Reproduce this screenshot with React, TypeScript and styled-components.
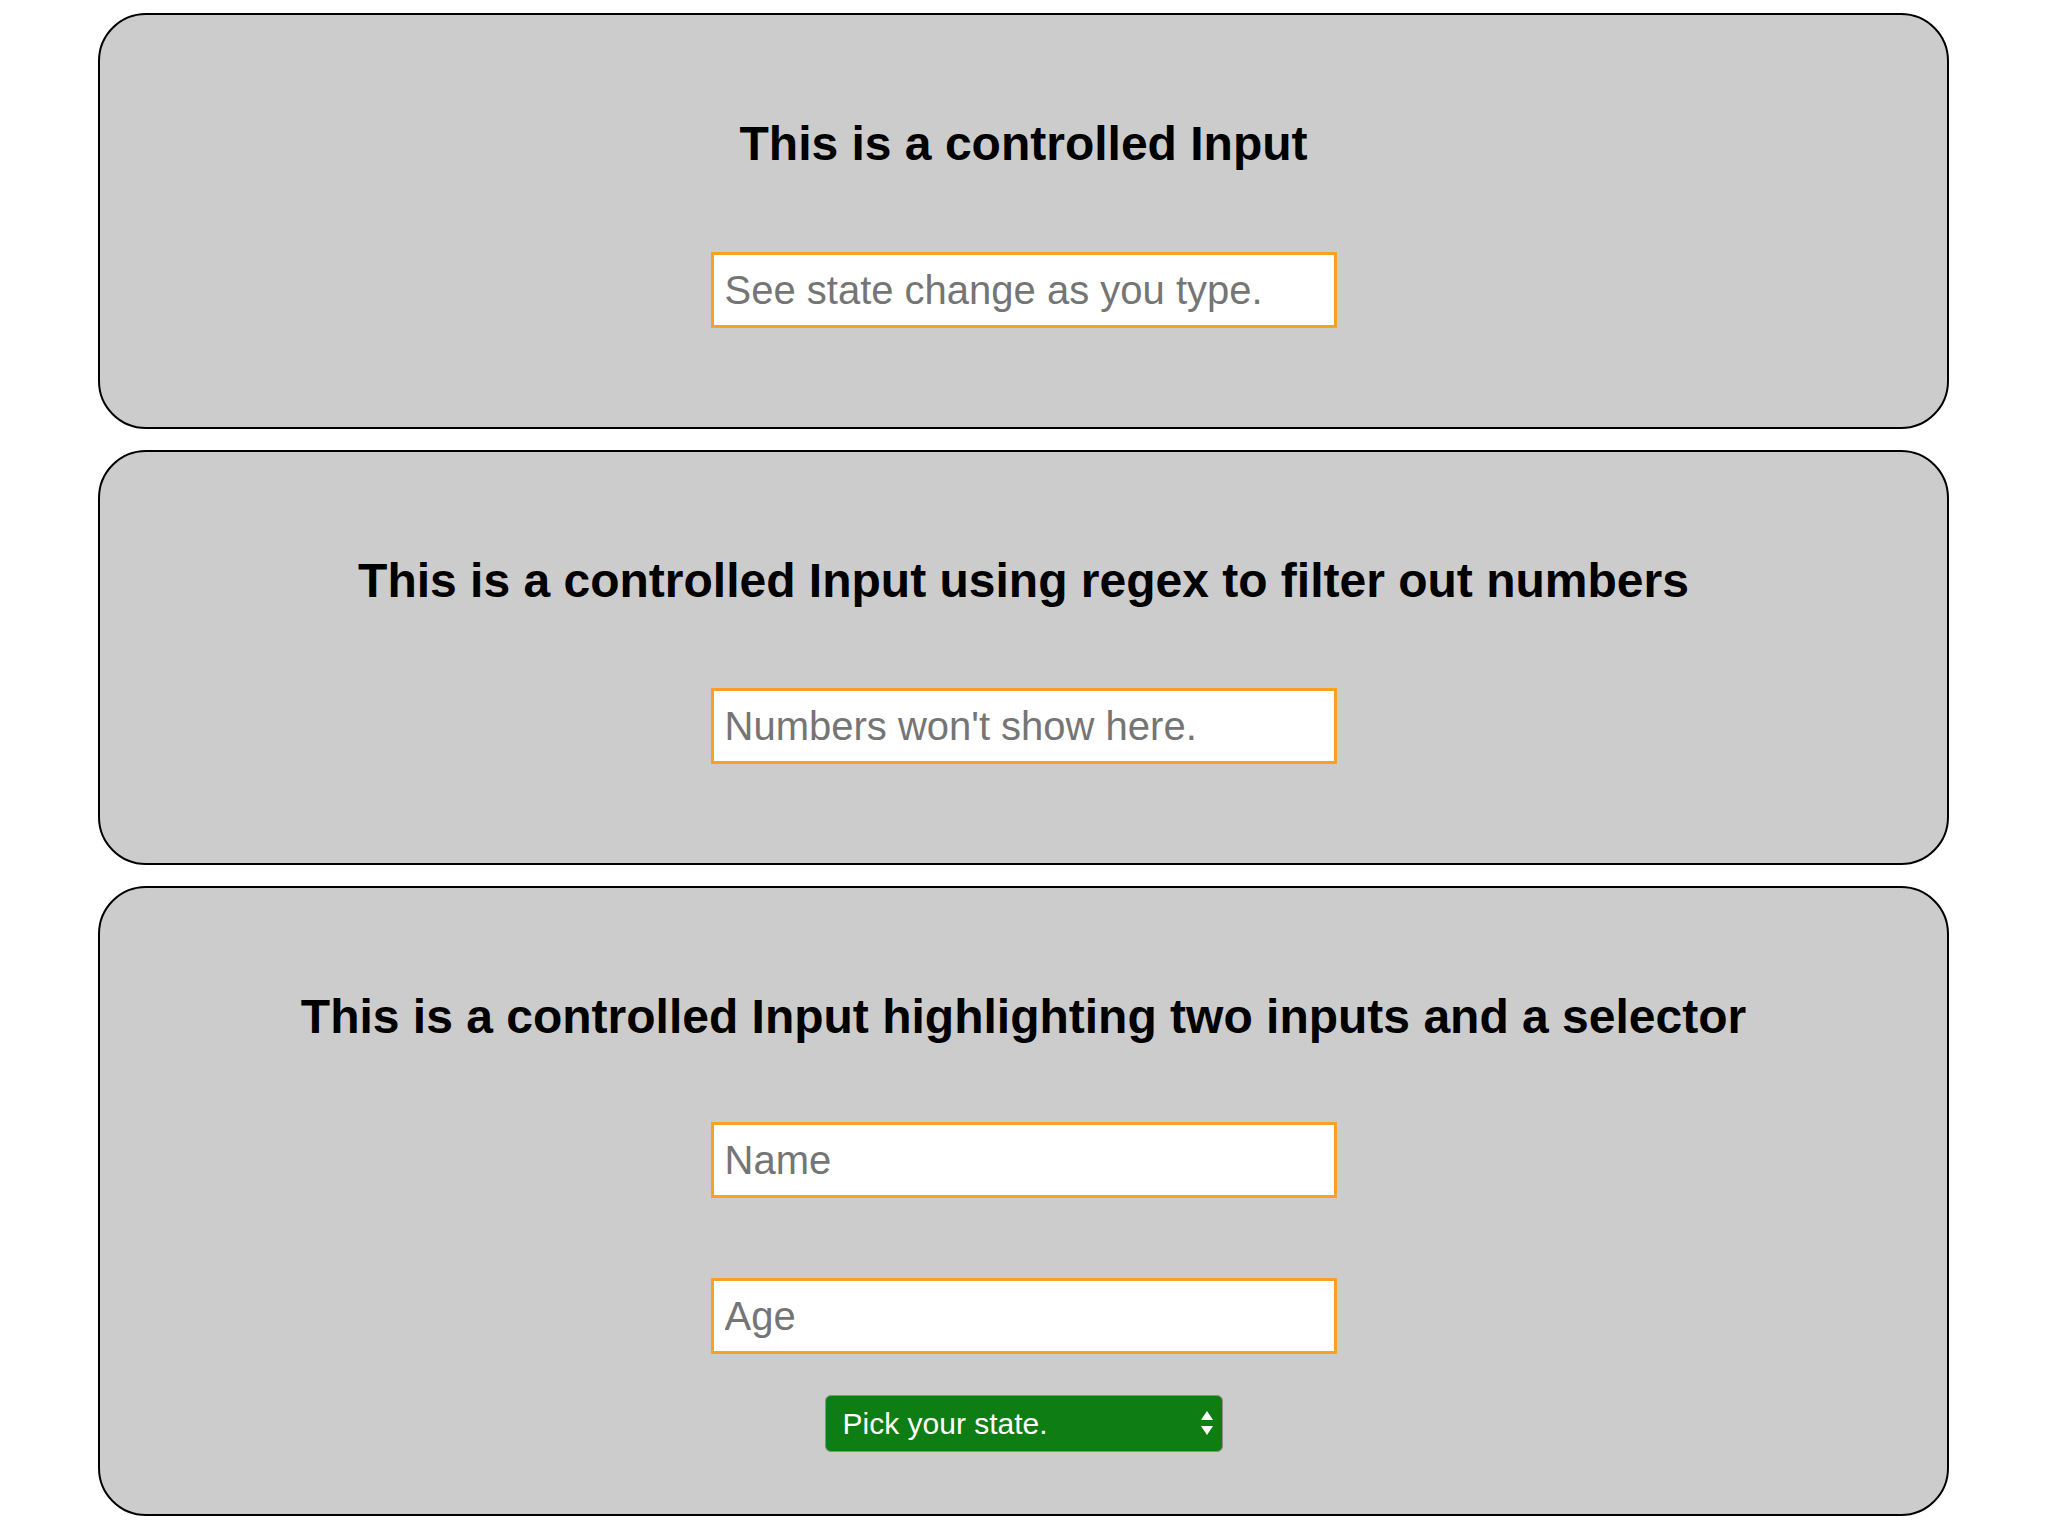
import React, { useState } from "react";
import styled, { createGlobalStyle } from "styled-components";

const GlobalStyle = createGlobalStyle`
  html, body {
    margin: 0;
    padding: 0;
    background: #ffffff;
    font-family: "Liberation Sans", Arial, sans-serif;
  }
`;

const Page = styled.main`
  display: flex;
  flex-direction: column;
  gap: 21px;
  padding: 13px 0 0 98px;
`;

const Card = styled.section<{ $bottom: number }>`
  box-sizing: border-box;
  width: 1851px;
  display: flex;
  flex-direction: column;
  align-items: center;
  background: #cccccc;
  border: 2px solid #000000;
  border-radius: 48px;
  padding: 102px 0 ${(p) => p.$bottom}px;
`;

const Heading = styled.h2<{ $gap: number }>`
  margin: 0 0 ${(p) => p.$gap}px;
  font-family: "Liberation Sans", Arial, sans-serif;
  font-size: 48px;
  line-height: 54px;
  font-weight: bold;
  color: #000000;
  text-align: center;
`;

const TextInput = styled.input<{ $after?: number }>`
  box-sizing: border-box;
  width: 626px;
  height: 76px;
  margin: 0 0 ${(p) => p.$after ?? 0}px;
  padding: 0 11px;
  border: 3px solid #f9a125;
  border-radius: 0;
  background: #ffffff;
  font-family: "Liberation Sans", Arial, sans-serif;
  font-size: 40px;
  color: #222222;
  outline: none;
  &::placeholder {
    color: #757575;
  }
`;

const SelectWrap = styled.div`
  position: relative;
  width: 398px;
  height: 57px;
`;

const StateSelect = styled.select`
  appearance: none;
  -webkit-appearance: none;
  box-sizing: border-box;
  width: 100%;
  height: 100%;
  margin: 0;
  padding: 0 40px 0 17px;
  border: 1px solid #8c8c8c;
  border-radius: 6px;
  background: #0e7d13;
  color: #ffffff;
  font-family: "Liberation Sans", Arial, sans-serif;
  font-size: 30px;
  outline: none;
`;

const Arrows = styled.svg`
  position: absolute;
  right: 10px;
  top: 16px;
  width: 12px;
  height: 25px;
  pointer-events: none;
`;

export default function App() {
  const [first, setFirst] = useState("");
  const [second, setSecond] = useState("");
  const [name, setName] = useState("");
  const [age, setAge] = useState("");
  const [state, setState] = useState("");

  return (
    <>
      <GlobalStyle />
      <Page>
        <Card $bottom={99}>
          <Heading $gap={81}>This is a controlled Input</Heading>
          <TextInput
            placeholder="See state change as you type."
            value={first}
            onChange={(e) => setFirst(e.target.value)}
          />
        </Card>
        <Card $bottom={99}>
          <Heading $gap={80}>This is a controlled Input using regex to filter out numbers</Heading>
          <TextInput
            placeholder="Numbers won't show here."
            value={second}
            onChange={(e) => setSecond(e.target.value.replace(/[0-9]/g, ""))}
          />
        </Card>
        <Card $bottom={62}>
          <Heading $gap={78}>This is a controlled Input highlighting two inputs and a selector</Heading>
          <TextInput
            placeholder="Name"
            $after={80}
            value={name}
            onChange={(e) => setName(e.target.value)}
          />
          <TextInput
            placeholder="Age"
            $after={41}
            value={age}
            onChange={(e) => setAge(e.target.value)}
          />
          <SelectWrap>
            <StateSelect value={state} onChange={(e) => setState(e.target.value)}>
              <option value="">Pick your state.</option>
              <option value="CA">California</option>
              <option value="NY">New York</option>
              <option value="TX">Texas</option>
            </StateSelect>
            <Arrows viewBox="0 0 12 25">
              <polygon points="6,0 12,9 0,9" fill="#ffffff" />
              <polygon points="0,15 12,15 6,24" fill="#ffffff" />
            </Arrows>
          </SelectWrap>
        </Card>
      </Page>
    </>
  );
}
